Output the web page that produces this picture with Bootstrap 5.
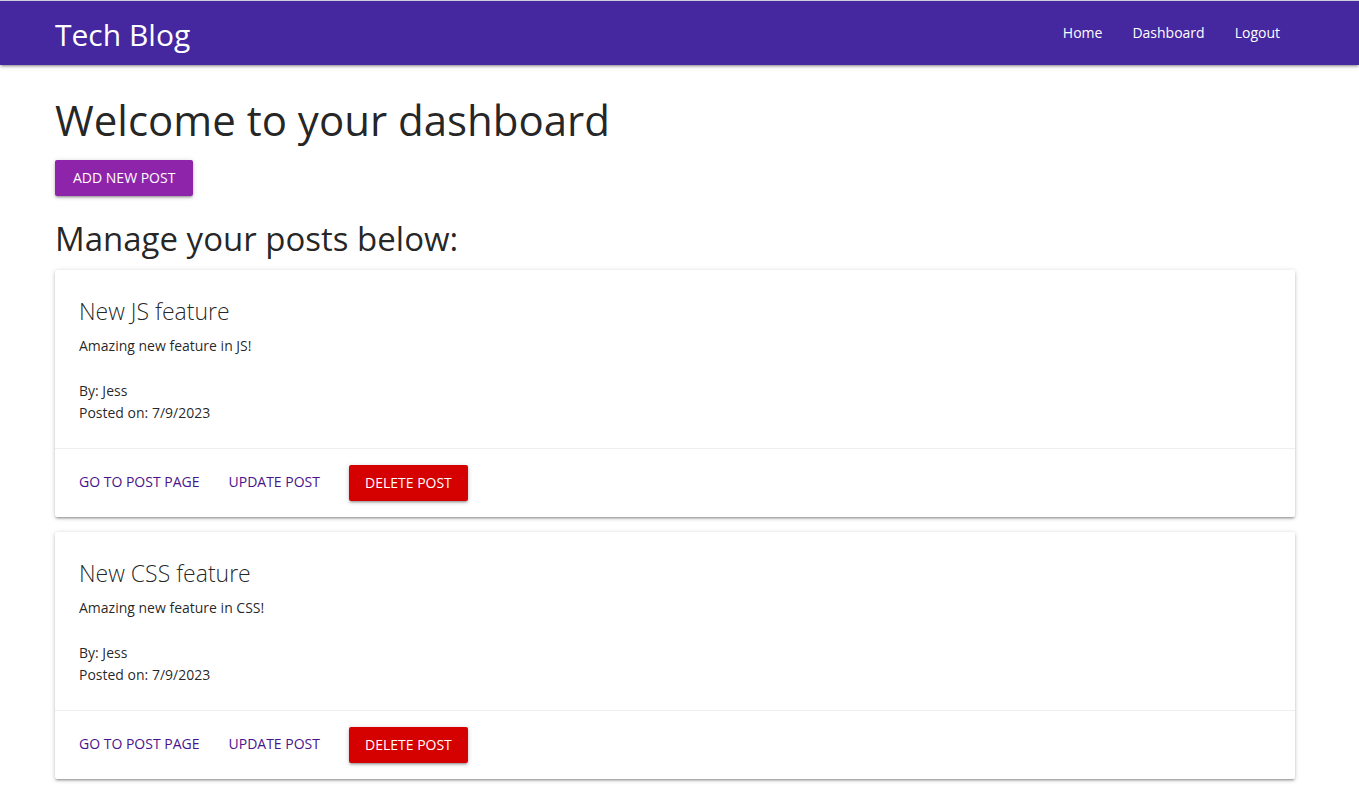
<!DOCTYPE html>
<html lang="en">
<head>
<meta charset="utf-8">
<meta name="viewport" content="width=device-width, initial-scale=1">
<title>Tech Blog</title>
<link rel="stylesheet" href="https://cdn.jsdelivr.net/npm/bootstrap@5.3.0/dist/css/bootstrap.min.css">
<style>
  :root { --raise: 0 2px 2px 0 rgba(0,0,0,.14), 0 3px 1px -2px rgba(0,0,0,.12), 0 1px 5px 0 rgba(0,0,0,.2); }
  body { font-family: "Open Sans", "Noto Sans", sans-serif; font-size: 14px; line-height: 22px; color: rgba(0,0,0,.87); }
  .page-width { padding: 0 64px 0 55px; }
  .topbar { background: #4527a0; border-top: 1px solid #cdd0dc; box-shadow: var(--raise); }
  .topbar .navbar-brand { font-size: 30px; line-height: 64px; color: #fff; padding: 2px 0 0; height: 64px; }
  .topbar .nav-link { font-size: 14px; line-height: 64px; color: #fff; }
  .topbar .nav-item { padding: 0 15px; }
  h1 { font-size: 42px; line-height: 46px; font-weight: 400; margin: 32px 0 17px; }
  h2 { font-size: 33px; line-height: 38px; font-weight: 400; margin: 24px 0 12px; }
  .action { height: 36px; padding: 0 16px; border: 0; border-radius: 2px; font-size: 14px; line-height: 36px; color: #fff; box-shadow: var(--raise); text-transform: uppercase; }
  .action:hover { color: #fff; }
  .action-add, .action-add:hover { background: #8e24aa; padding: 0 18px; }
  .action-delete, .action-delete:hover { background: #d50000; }
  .post { border: 0; border-radius: 2px; margin-bottom: 15px; box-shadow: var(--raise); color: rgba(0,0,0,.87); }
  .post .card-body { padding: 24px; }
  .post .card-title { font-size: 23px; line-height: 34px; font-weight: 300; margin-bottom: 7px; }
  .post .card-text { margin-bottom: 23px; }
  .post .card-footer { padding: 16px 24px; background: none; border-top: 1px solid #eee; gap: 29px; }
  .post .card-footer a { color: #4a148c; line-height: 34px; text-decoration: none; text-transform: uppercase; }
</style>
</head>
<body>
<nav class="topbar navbar-expand">
  <div class="page-width d-flex justify-content-between">
    <a class="navbar-brand m-0" href="#">Tech Blog</a>
    <ul class="navbar-nav">
      <li class="nav-item"><a class="nav-link p-0" href="#">Home</a></li>
      <li class="nav-item"><a class="nav-link p-0" href="#">Dashboard</a></li>
      <li class="nav-item"><a class="nav-link p-0" href="#">Logout</a></li>
    </ul>
  </div>
</nav>
<main class="page-width">
  <h1>Welcome to your dashboard</h1>
  <button class="btn action action-add" type="button">Add new post</button>
  <h2>Manage your posts below:</h2>
  <article class="card post">
    <div class="card-body">
      <h3 class="card-title">New JS feature</h3>
      <p class="card-text">Amazing new feature in JS!</p>
      <p class="mb-0">By: Jess<br>Posted on: 7/9/2023</p>
    </div>
    <div class="card-footer d-flex align-items-start">
      <a href="#">Go to post page</a><a href="#">Update post</a>
      <button class="btn action action-delete" type="button">Delete post</button>
    </div>
  </article>
  <article class="card post">
    <div class="card-body">
      <h3 class="card-title">New CSS feature</h3>
      <p class="card-text">Amazing new feature in CSS!</p>
      <p class="mb-0">By: Jess<br>Posted on: 7/9/2023</p>
    </div>
    <div class="card-footer d-flex align-items-start">
      <a href="#">Go to post page</a><a href="#">Update post</a>
      <button class="btn action action-delete" type="button">Delete post</button>
    </div>
  </article>
</main>
<script src="https://cdn.jsdelivr.net/npm/bootstrap@5.3.0/dist/js/bootstrap.bundle.min.js"></script>
</body>
</html>
